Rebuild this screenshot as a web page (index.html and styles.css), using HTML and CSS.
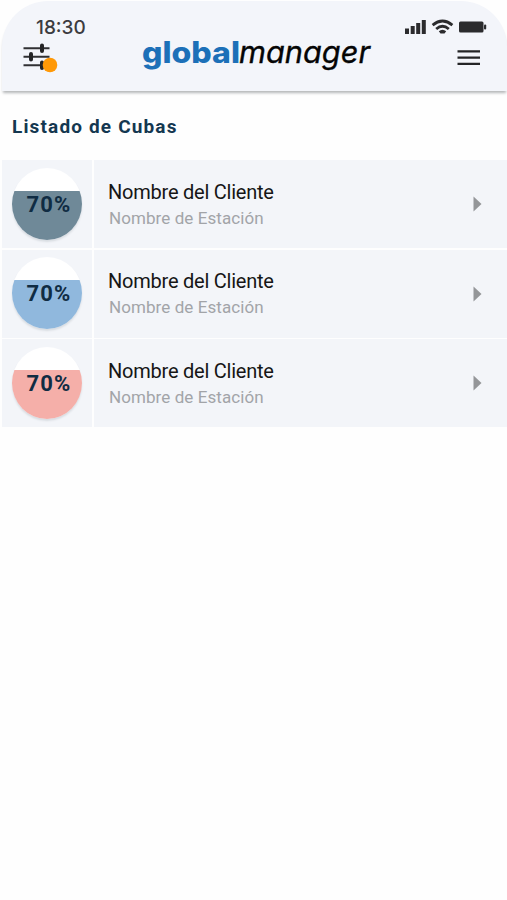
FILE: index.html
```html
<!DOCTYPE html>
<html lang="es">
<head>
<meta charset="utf-8">
<title>Listado de Cubas</title>
<link rel="stylesheet" href="styles.css">
</head>
<body>
<div class="app">
  <header class="header">
    <div class="status">
      <span class="time">18:30</span>
      <svg class="signals" width="82" height="16" viewBox="0 0 82 16" fill="#2b2b2d">
        <path d="M0 9.500h4V15H0zM5.700 7h4v8h-4zM11.200 4h4v11h-4zM16.800 1h4v14h-4z"/>
        <g fill="none" stroke="#2b2b2d" stroke-width="2.800">
          <path d="M27.600 6.100Q37.500-2 47.400 6.100"/>
          <path d="M31.200 10Q37.500 4.600 43.800 10"/>
        </g>
        <path d="M33.800 12.300Q37.500 9.300 41.200 12.300L39.500 14.500H35.500z"/>
        <rect x="54" y="2.500" width="24.500" height="11" rx="1.500"/>
        <rect x="79" y="5.500" width="2.200" height="5" rx="1"/>
      </svg>
    </div>
    <div class="bar">
      <button class="icon filter" aria-label="Filtros">
        <svg width="36" height="32" viewBox="0 0 36 32">
          <path d="M1.500 6.200H27.500M1.500 14.700H27.500M1.500 23.200H20" stroke="#303033" stroke-width="2"/>
          <path d="M20 3.500v5.500M9 12v5.500M20 20.500v5.500" stroke="#242426" stroke-width="4" stroke-linecap="round"/>
          <circle cx="28" cy="23" r="7.300" fill="#ff9907"/>
        </svg>
      </button>
      <svg class="logo" width="236" height="46" viewBox="0 0 236 46">
        <text class="logo-bold" x="3" y="28" textLength="98" lengthAdjust="spacingAndGlyphs">global</text>
        <text class="logo-light" x="100" y="28" textLength="131" lengthAdjust="spacingAndGlyphs">manager</text>
      </svg>
      <button class="icon menu" aria-label="Menú">
        <svg width="24" height="18" viewBox="0 0 24 18">
          <path d="M.5 2.300H23M.5 8.600H23M.5 14.800H23" stroke="#242426" stroke-width="2.300"/>
        </svg>
      </button>
    </div>
  </header>
  <main>
    <h1 class="title">Listado de Cubas</h1>
    <ul class="list">
      <li class="row">
        <div class="level"><div class="gauge slate">70%</div></div>
        <div class="info">
          <div class="text"><div class="client">Nombre del Cliente</div><div class="station">Nombre de Estación</div></div>
          <svg class="arrow" width="9" height="16" viewBox="0 0 9 16"><path d="M.5.500L8.500 8L.5 15.500z" fill="#949699"/></svg>
        </div>
      </li>
      <li class="row">
        <div class="level"><div class="gauge blue">70%</div></div>
        <div class="info">
          <div class="text"><div class="client">Nombre del Cliente</div><div class="station">Nombre de Estación</div></div>
          <svg class="arrow" width="9" height="16" viewBox="0 0 9 16"><path d="M.5.500L8.500 8L.5 15.500z" fill="#949699"/></svg>
        </div>
      </li>
      <li class="row">
        <div class="level"><div class="gauge red">70%</div></div>
        <div class="info">
          <div class="text"><div class="client">Nombre del Cliente</div><div class="station">Nombre de Estación</div></div>
          <svg class="arrow" width="9" height="16" viewBox="0 0 9 16"><path d="M.5.500L8.500 8L.5 15.500z" fill="#949699"/></svg>
        </div>
      </li>
    </ul>
  </main>
</div>
</body>
</html>
```
FILE: styles.css
```css
* { box-sizing: border-box; }
body {
  margin: 0;
  background: #fefefe;
  font-family: Roboto, sans-serif;
}
.app { padding: 1px 0 0 2px; }
.header {
  height: 90px;
  padding-top: 16px;
  background: #f3f5fa;
  border-radius: 46px 46px 0 0;
  box-shadow: 0 3px 3px -1px #b4b6b8;
}
.status {
  display: flex;
  justify-content: space-between;
  height: 20px;
  padding: 0 20px 0 34px;
}
.time {
  font: 500 19px/21px Inter, sans-serif;
  color: #3c3c3f;
}
.signals { margin-top: 2px; }
.bar {
  display: flex;
  align-items: flex-start;
  padding: 0 26px 0 20px;
}
.icon {
  display: block;
  padding: 0;
  border: 0;
  background: none;
}
.icon svg { display: block; }
.filter { margin-top: 5px; }
.logo {
  margin: -2px 0 0 81px;
  overflow: visible;
}
.logo-bold { font: 800 29.5px Inter, sans-serif; fill: #1c70b8; }
.logo-light { font: italic 400 31px Inter, sans-serif; fill: #050505; stroke: #050505; stroke-width: 0.35; }
.menu { margin: 12px 0 0 auto; }
.title {
  margin: 0;
  padding: 24px 0 22px 10px;
  font-size: 19px;
  line-height: 23px;
  font-weight: 700;
  letter-spacing: 1.15px;
  color: #143750;
}
.list {
  display: grid;
  gap: 1.5px;
  margin: 0;
  padding: 0;
  list-style: none;
}
.row {
  display: grid;
  grid-template-columns: 90px 1fr;
  gap: 2px;
  height: 88px;
}
.level, .info {
  display: flex;
  align-items: center;
  background: #f3f5f9;
}
.level { padding: 0 0 1px 10px; }
.gauge {
  width: 70px;
  height: 72px;
  border-radius: 50%;
  padding-left: 4px;
  font-size: 22px;
  font-weight: 700;
  line-height: 74px;
  letter-spacing: 1.1px;
  text-align: center;
  color: #102c43;
  box-shadow: 0 2px 2px #d9dde2;
}
.slate { background: linear-gradient(#fff 23px, #6f8998 23px); }
.blue { background: linear-gradient(#fff 23px, #90b8dd 23px); }
.red { background: linear-gradient(#fff 23px, #f5afa9 23px); }
.info {
  justify-content: space-between;
  padding: 0 25px 0 14px;
}
.client {
  font-size: 20px;
  line-height: 28px;
  letter-spacing: -0.23px;
  color: #161616;
}
.station {
  padding-left: 1px;
  font-size: 17px;
  line-height: 25px;
  letter-spacing: 0.08px;
  color: #a2a4a8;
}
```
